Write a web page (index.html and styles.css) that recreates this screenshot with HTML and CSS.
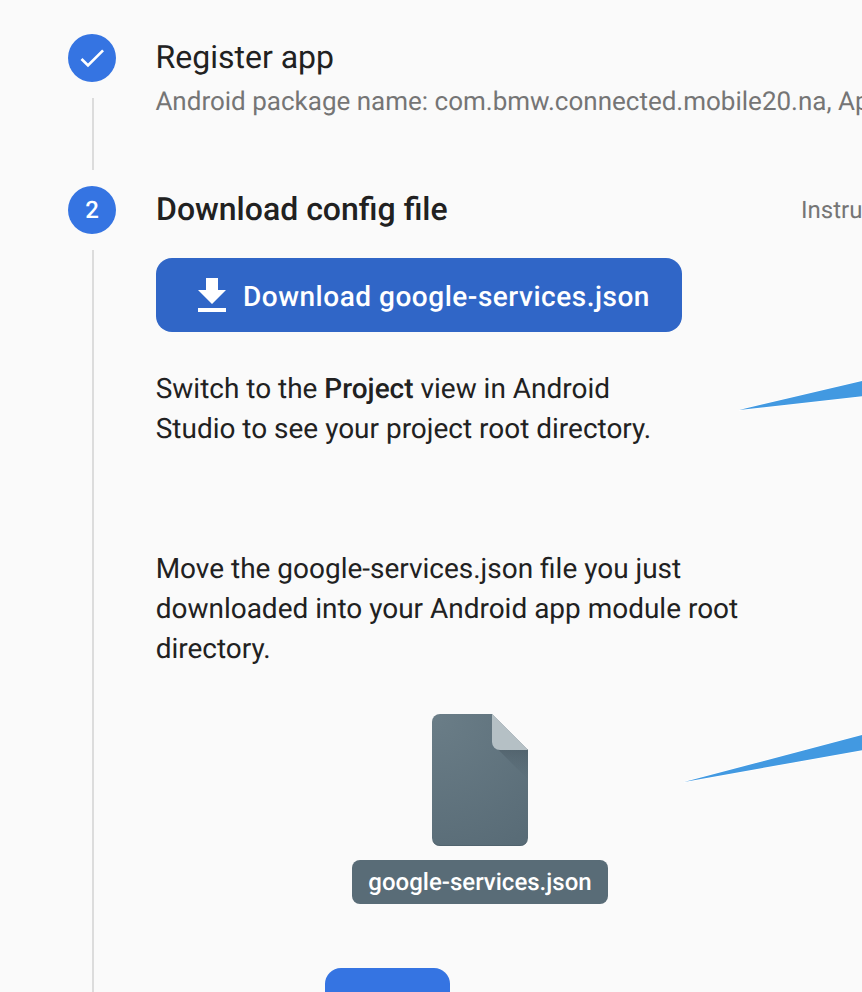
FILE: index.html
```html
<!DOCTYPE html>
<html lang="en">
<head>
<meta charset="utf-8">
<title>Add app</title>
<link rel="stylesheet" href="styles.css">
</head>
<body>
<main class="stepper">
  <section class="step step-done">
    <div class="rail">
      <span class="badge"><svg class="check" width="32" height="32" viewBox="0 0 24 24"><path d="M9 16.17L4.83 12l-1.42 1.41L9 19 21 7l-1.41-1.41z" fill="#fff"/></svg></span>
      <span class="line"></span>
    </div>
    <div class="body">
      <h2 class="title light">Register app</h2>
      <p class="subtitle">Android package name: com.bmw.connected.mobile20.na, App</p>
    </div>
  </section>
  <section class="step step-current">
    <div class="rail">
      <span class="badge">2</span>
      <span class="line"></span>
    </div>
    <div class="body">
      <header class="head">
        <h2 class="title">Download config file</h2>
        <span class="hint">Instru</span>
      </header>
      <button class="download"><svg width="28" height="34" viewBox="0 0 28 34"><path d="M8 0h12v12h8L14 26 0 12h8zM0 30h28v4H0z" fill="#fff"/></svg><span class="label">Download google-services.json</span></button>
      <p class="copy first">Switch to the <b>Project</b> view in Android<br>Studio to see your project root directory.</p>
      <p class="copy second">Move the google-services.json file you just<br>downloaded into your Android app module root<br>directory.</p>
      <figure class="file">
        <svg class="doc" width="96" height="132" viewBox="0 0 96 132">
          <defs>
            <radialGradient id="paper" gradientUnits="userSpaceOnUse" cx="3" cy="2" r="155"><stop stop-color="#6a7d87"/><stop offset="1" stop-color="#586b76"/></radialGradient>
            <linearGradient id="shade" x1="0" y1="0" x2="0" y2="1"><stop stop-color="#43525c" stop-opacity=".45"/><stop offset="1" stop-color="#526570" stop-opacity=".05"/></linearGradient>
          </defs>
          <path d="M8 0h52l36 36v88a8 8 0 0 1-8 8H8a8 8 0 0 1-8-8V8a8 8 0 0 1 8-8z" fill="url(#paper)"/>
          <path d="M65.500 35L96 65.500V35z" fill="url(#shade)"/>
          <path d="M60 0l36 36H68a8 8 0 0 1-8-8z" fill="#b5c0c5"/>
          <path d="M1 127.500a8 8 0 0 0 7 4h80a8 8 0 0 0 7-4" fill="none" stroke="#485963" stroke-opacity=".5"/>
        </svg>
        <figcaption class="filename">google-services.json</figcaption>
      </figure>
      <button class="next" aria-label="Next"></button>
    </div>
  </section>
</main>
<svg class="pointer upper" width="123" height="34" viewBox="-1 -2 123 34"><path d="M-1 29L126 -1V14.700z" fill="#4299e1" stroke="#fff" stroke-width="1.500" stroke-linejoin="bevel" paint-order="stroke"/></svg>
<svg class="pointer lower" width="178" height="52" viewBox="-1 -2 178 52"><path d="M-1 47L181 -1V14.500z" fill="#4299e1" stroke="#fff" stroke-width="1.500" stroke-linejoin="bevel" paint-order="stroke"/></svg>
</body>
</html>
```
FILE: styles.css
```css
* { box-sizing: border-box; }
html, body { height: 100%; }
body { margin: 0; overflow: hidden; position: relative; background: #fafafa; color: #212121; font-family: Roboto, sans-serif; text-rendering: geometricPrecision; -webkit-font-smoothing: antialiased; }
h2, p, figure { margin: 0; }
svg { display: block; }
.stepper { padding: 34px 0 0 68px; }
.step { display: flex; gap: 40px; }
.step-done { height: 152px; }
.step-current { height: 806px; }
.rail { width: 48px; flex: none; display: flex; flex-direction: column; align-items: center; gap: 16px; }
.badge { width: 48px; height: 48px; flex: none; border-radius: 50%; background: #3574e2; color: #fff; font-size: 24px; font-weight: 500; line-height: 48px; text-align: center; }
.check { margin: 8px; }
.line { width: 2px; flex: 1; margin-left: 2px; background: #dcdcdc; }
.step-done .line { margin-bottom: 16px; }
.body { flex: 1; min-width: 0; white-space: nowrap; }
.title { font-size: 32px; line-height: 46px; font-weight: 500; }
.light { font-weight: 400; margin-left: -.5px; }
.subtitle { color: #757575; font-size: 26px; line-height: 32px; margin: 6px 0 0 -.6px; overflow: hidden; }
.head { display: flex; height: 48px; }
.hint { margin-left: auto; width: 61px; color: #757575; font-size: 24px; line-height: 48px; overflow: hidden; }
.download { display: flex; align-items: center; gap: 17px; width: 526px; height: 74px; margin-top: 24px; padding: 0 0 0 42px; border: 0; border-radius: 16px; background: #3066c7; color: #fff; font: 500 28px/36px Roboto, sans-serif; letter-spacing: .52px; text-rendering: inherit; }
.label { padding-top: 4px; }
.copy { font-size: 27.98px; line-height: 40px; margin-left: -.3px; }
.copy b { font-weight: 500; }
.first { margin-top: 37px; }
.second { margin-top: 100px; }
.file { width: 256px; margin: 45px 0 0 196px; display: flex; flex-direction: column; align-items: center; gap: 14px; }
.filename { width: 256px; height: 44px; border-radius: 8px; background: #596c77; color: #fff; font-size: 24px; font-weight: 500; line-height: 44px; text-align: center; }
.next { display: block; width: 125px; height: 72px; margin: 64px 0 0 169px; border: 0; border-radius: 16px; background: #3574e2; }
.pointer { position: absolute; right: 0; }
.upper { top: 379px; }
.lower { top: 733px; }
```
